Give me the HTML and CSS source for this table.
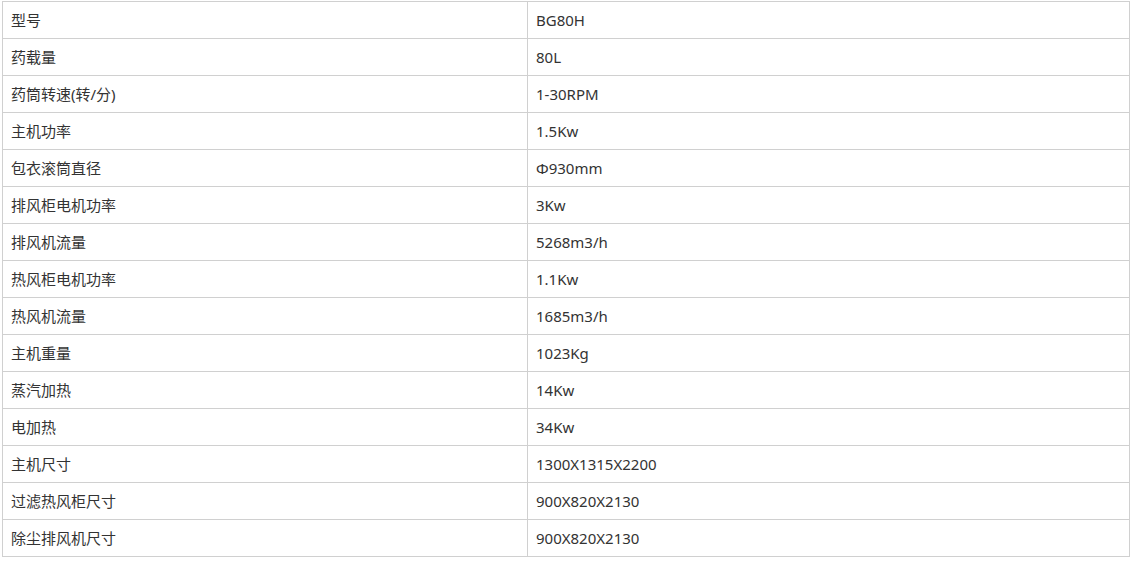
FILE: index.html
```html
<!DOCTYPE html>
<html lang="zh-CN">
<head>
<meta charset="utf-8">
<title>参数</title>
<link rel="stylesheet" href="styles.css">
</head>
<body>
<table class="spec">
  <colgroup><col class="c1"><col class="c2"></colgroup>
  <tbody>
    <tr><td>型号</td><td>BG80H</td></tr>
    <tr><td>药载量</td><td>80L</td></tr>
    <tr><td>药筒转速(转/分)</td><td>1-30RPM</td></tr>
    <tr><td>主机功率</td><td>1.5Kw</td></tr>
    <tr><td>包衣滚筒直径</td><td>Φ930mm</td></tr>
    <tr><td>排风柜电机功率</td><td>3Kw</td></tr>
    <tr><td>排风机流量</td><td>5268m3/h</td></tr>
    <tr><td>热风柜电机功率</td><td>1.1Kw</td></tr>
    <tr><td>热风机流量</td><td>1685m3/h</td></tr>
    <tr><td>主机重量</td><td>1023Kg</td></tr>
    <tr><td>蒸汽加热</td><td>14Kw</td></tr>
    <tr><td>电加热</td><td>34Kw</td></tr>
    <tr><td>主机尺寸</td><td>1300X1315X2200</td></tr>
    <tr><td>过滤热风柜尺寸</td><td>900X820X2130</td></tr>
    <tr><td>除尘排风机尺寸</td><td>900X820X2130</td></tr>
  </tbody>
</table>
</body>
</html>
```
FILE: styles.css
```css
html, body {
  margin: 0;
  padding: 0;
  background: #fff;
}
body {
  padding: 1px 2px;
  font-family: "Noto Sans", "Noto Sans CJK SC", sans-serif;
  font-size: 15px;
  color: #333;
}
.spec {
  border-collapse: collapse;
  table-layout: fixed;
  width: 1128px;
}
.spec .c1 { width: 525px; }
.spec td {
  border: 1px solid #d0d0d0;
  height: 36px;
  padding: 0 8px;
  box-sizing: border-box;
  vertical-align: middle;
  line-height: 20px;
}
.spec tr { height: 37px; }
```
